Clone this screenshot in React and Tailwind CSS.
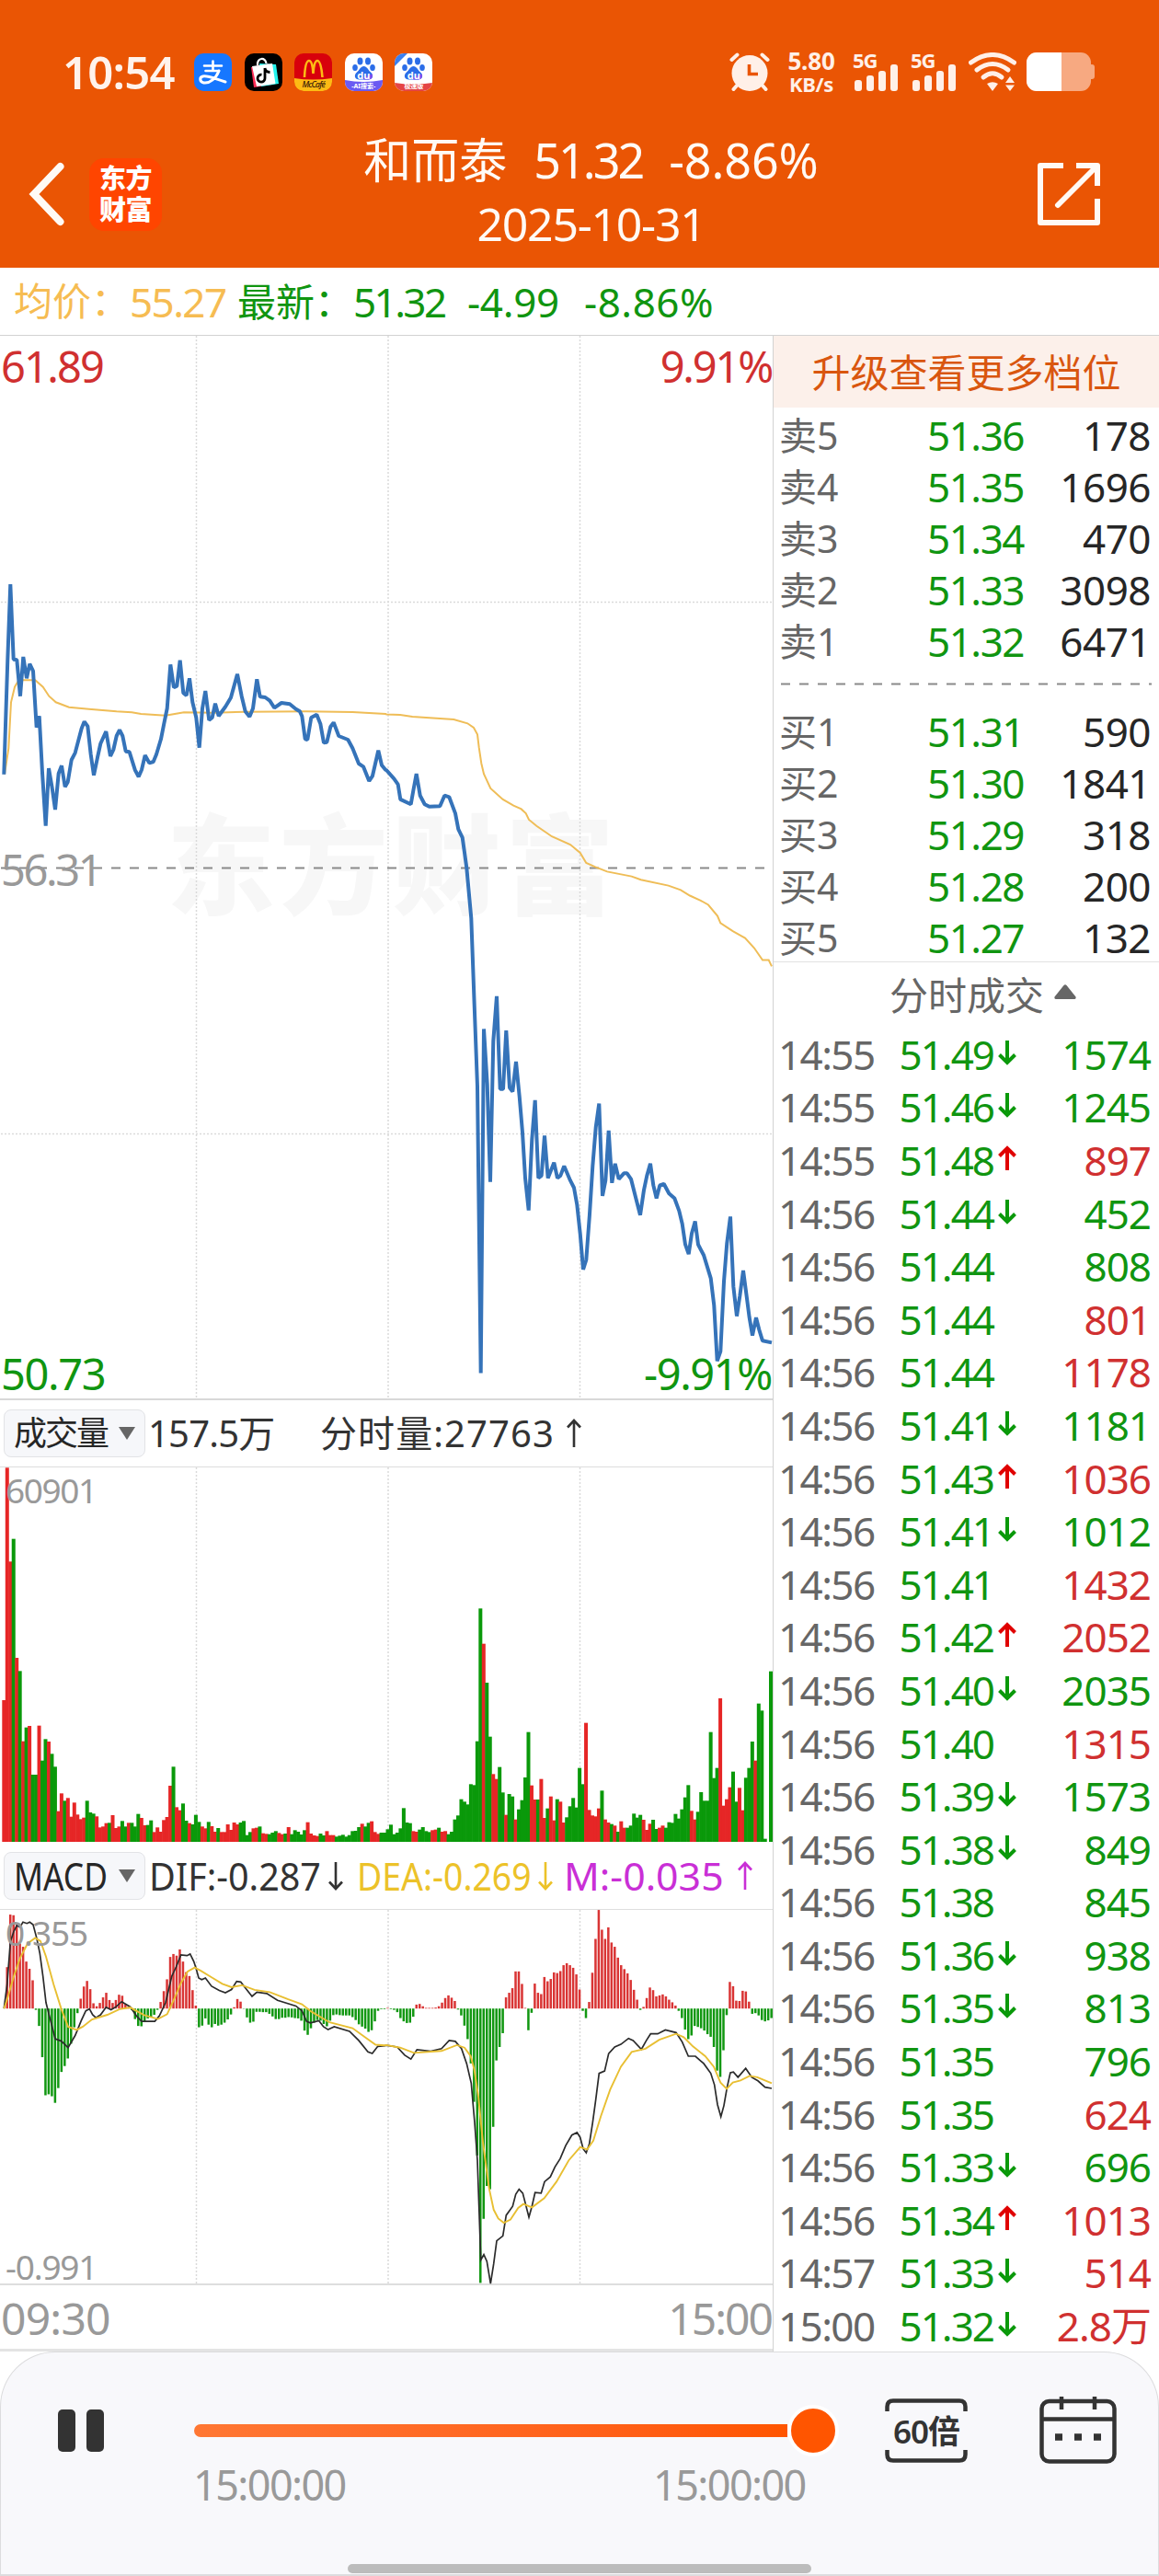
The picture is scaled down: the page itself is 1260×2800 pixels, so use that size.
import React from "react";

const GREEN = "#0a990a";
const RED = "#e62626";

/* ---------- data ---------- */

const asks = [
  ["卖5", "51.36", "178"],
  ["卖4", "51.35", "1696"],
  ["卖3", "51.34", "470"],
  ["卖2", "51.33", "3098"],
  ["卖1", "51.32", "6471"],
];
const bids = [
  ["买1", "51.31", "590"],
  ["买2", "51.30", "1841"],
  ["买3", "51.29", "318"],
  ["买4", "51.28", "200"],
  ["买5", "51.27", "132"],
];
const ticks = [
  ["14:55", "51.49", "d", "1574", "g"],
  ["14:55", "51.46", "d", "1245", "g"],
  ["14:55", "51.48", "u", "897", "r"],
  ["14:56", "51.44", "d", "452", "g"],
  ["14:56", "51.44", "", "808", "g"],
  ["14:56", "51.44", "", "801", "r"],
  ["14:56", "51.44", "", "1178", "r"],
  ["14:56", "51.41", "d", "1181", "g"],
  ["14:56", "51.43", "u", "1036", "r"],
  ["14:56", "51.41", "d", "1012", "g"],
  ["14:56", "51.41", "", "1432", "r"],
  ["14:56", "51.42", "u", "2052", "r"],
  ["14:56", "51.40", "d", "2035", "g"],
  ["14:56", "51.40", "", "1315", "r"],
  ["14:56", "51.39", "d", "1573", "g"],
  ["14:56", "51.38", "d", "849", "g"],
  ["14:56", "51.38", "", "845", "g"],
  ["14:56", "51.36", "d", "938", "g"],
  ["14:56", "51.35", "d", "813", "g"],
  ["14:56", "51.35", "", "796", "g"],
  ["14:56", "51.35", "", "624", "r"],
  ["14:56", "51.33", "d", "696", "g"],
  ["14:56", "51.34", "u", "1013", "r"],
  ["14:57", "51.33", "d", "514", "r"],
  ["15:00", "51.32", "d", "2.8万", "r"],
];

const priceMorning =
  "13,725 25,350 34,105 44,350 55,352 66,470 76,342 87,412 97,365 108,388 119,572 128,535 138,720 149,893 159,705 170,770 180,840 191,722 201,697 212,766 221,750 233,678 245,655 266,575 275,553 286,568 296,660 306,728 318,670 328,625 346,585 360,666 370,645 380,600 390,580 400,600 410,650 422,652 440,710 452,733 462,710 473,663 487,688 500,684 510,660 525,610 535,560 545,510 556,367 567,442 577,437 587,353 598,460 608,468 618,412 628,490 640,540 650,638 660,510 670,453 682,548 692,540 702,494 713,535 735,505 753,475 774,398 788,470 800,520 814,537 825,510 838,415 848,472 865,474 880,485 895,508 918,492 945,496 965,512 978,520 985,535 995,610 1003,612 1015,540 1033,530 1045,560 1056,622 1066,620 1078,570 1088,556 1105,600 1135,612 1150,640 1170,690 1185,700 1204,747 1215,730 1234,647 1245,695 1258,711";
const priceAfternoon =
  "0,262 25,280 38,292 46,323 80,333 88,305 98,270 110,315 125,333 140,338 175,337 190,315 205,318 225,352 235,385 248,402 262,465 277,570 287,750 297,920 308,1515 318,800 329,915 339,1118 349,825 360,732 371,925 381,925 391,803 402,922 412,930 423,868 434,940 444,1015 453,1110 464,1177 475,1030 485,948 496,1110 506,1105 516,1022 527,1110 547,1078 558,1110 568,1105 580,1085 600,1115 612,1130 622,1165 632,1225 642,1300 652,1280 663,1185 673,1085 683,1005 694,955 705,1147 715,1115 725,1011 736,1120 746,1080 758,1112 775,1100 785,1100 798,1112 815,1155 828,1187 840,1135 850,1105 861,1080 871,1125 881,1152 892,1125 905,1122 922,1142 940,1152 955,1178 965,1205 975,1248 986,1268 996,1225 1007,1200 1017,1248 1035,1270 1058,1318 1069,1375 1079,1490 1090,1470 1101,1325 1111,1245 1122,1190 1132,1335 1143,1397 1153,1355 1164,1302 1174,1350 1184,1400 1194,1437 1206,1400 1216,1425 1227,1448 1257,1452";
const avgMorning =
  "15,725 28,640 36,490 48,440 60,420 75,418 115,418 140,440 160,470 182,490 225,506 290,512 380,520 430,523 460,528 540,533 570,528 600,523 700,524 800,521 1000,520 1150,522 1258,528";
const avgAfternoon =
  "0,146 45,147 85,151 220,157 265,165 285,174 297,188 302,215 310,248 318,270 340,300 380,323 415,336 440,343 455,352 465,365 490,378 540,400 600,417 632,434 652,455 680,463 720,473 800,483 830,490 920,502 960,511 990,523 1025,533 1050,542 1080,565 1090,580 1130,597 1170,611 1200,632 1227,657 1247,657 1257,670";

const volumes =
  "1043r 285r 591r 517g 905r 948g 1177r 1132g 1127r 1286g 1286g 1126r 1240g 1170g 1178r 1218g 1260g 1405r 1347r 1371g 1362r 1423r 1377r 1416r 1431r 1426r 1371g 1409g 1413g 1422r 1458r 1455r 1444r 1443g 1418r 1460r 1455r 1437g 1455g 1443r 1443g 1455g 1414g 1427r 1451r 1450g 1435g 1473r 1458r 1472r 1434r 1424r 1322r 1260g 1392r 1402r 1380g 1436g 1444r 1448g 1417g 1440g 1455r 1461r 1440g 1454r 1472r 1460g 1473r 1473r 1448r 1466r 1442r 1448r 1442g 1437g 1483g 1473g 1461r 1459r 1455g 1477r 1479r 1480g 1475g 1470g 1476r 1480r 1478g 1457r 1480g 1467g 1472g 1481g 1467g 1441r 1478r 1484r 1486r 1478g 1484g 1470r 1483r 1483r 1488g 1485g 1482g 1488g 1483g 1470g 1469g 1457g 1446r 1455g 1443g 1438r 1473r 1479r 1475g 1475g 1464g 1449g 1480g 1475g 1461g 1395g 1442g 1444g 1470r 1472r 1465g 1457g 1470g 1473g 1467r 1465r 1459g 1472r 1470r 1480g 1472g 1432g 1419g 1366g 1374g 1383g 1317g 1320g 1177g 744g 859r 986g 1162g 1284r 1300r 1261g 1344g 1417r 1349g 1357g 1432r 1399g 1369g 1295g 1147g 1321r 1367r 1367g 1300r 1427r 1396g 1357r 1435r 1366g 1374r 1442r 1425g 1389g 1362g 1393g 1264g 1317g 1117r 1401r 1419r 1422r 1396r 1338g 1432r 1442r 1447g 1452r 1472g 1438r 1459r 1459g 1452g 1413g 1426g 1417g 1433r 1466r 1446r 1433g 1463g 1459r 1452r 1459g 1441g 1443g 1414g 1429g 1399g 1360g 1320g 1404r 1432r 1407g 1343g 1371g 1371g 1147g 1297g 1264g 1037r 1387r 1366r 1327r 1276g 1374g 1329r 1402r 1296g 1264g 1178g 1240r 1054g 1077g 1495g 1505g 949g"
    .split(" ")
    .map((v) => ({ h: (1505 - parseInt(v, 10)) / 3, up: v.endsWith("r") }));

const histogram =
  "513 387 227 229 258 315 325 370 392 427 517 566 661 777 774 780 800 755 706 688 665 620 570 527 483 446 429 454 497 506 496 479 465 487 496 487 471 474 500 508 518 545 566 567 553 543 538 532 517 493 460 424 356 347 352 333 370 402 414 457 504 570 565 543 562 570 560 565 562 556 546 531 509 484 492 514 540 556 553 523 523 524 524 529 537 545 545 541 541 539 540 542 543 550 580 593 573 556 548 550 560 567 550 533 531 533 534 534 534 539 548 561 568 574 584 579 552 520 515 515 511 515 517 524 542 552 557 556 538 501 499 506 511 511 511 510 506 495 481 473 480 490 516 534 565 606 680 797 960 1348 1153 1053 1063 873 671 630 588 479 465 451 400 400 438 511 579 526 437 465 469 417 430 423 403 405 399 381 375 381 389 409 455 520 542 493 404 301 213 273 301 266 312 325 358 381 393 406 426 456 486 517 508 481 449 457 476 473 470 476 486 494 504 520 542 577 606 595 566 569 573 580 591 599 630 702 721 640 533 432 445 489 490 459 461 492 529 527 534 548 552 549 542"
    .split(" ")
    .map((v) => (513 - Number(v)) / 2.8);

const difMorning =
  "13,513 23,440 34,310 45,278 55,260 65,265 75,250 88,254 97,250 108,258 120,300 130,345 140,415 150,495 165,550 180,605 200,612 222,632 245,595 265,550 280,520 292,514 302,532 313,541 328,532 346,509 362,517 378,508 397,492 425,508 445,535 462,552 505,552 520,535 540,495 560,415 575,385 590,350 610,352 620,347 632,370 640,392 648,420 658,425 670,420 690,445 715,458 735,465 755,455 772,430 785,432 800,450 822,476 838,463 870,467 905,488 965,505 985,520 1000,552 1012,557 1040,550 1055,568 1070,577 1090,568 1140,582 1170,610 1200,645 1214,650 1232,628 1255,626";
const difAfternoon =
  "0,625 35,630 60,655 80,667 100,638 145,643 180,635 205,610 225,613 245,635 262,680 277,740 288,860 297,975 308,1278 318,1262 328,1282 340,1350 350,1290 360,1220 380,1205 391,1142 412,1115 422,1078 433,1063 445,1075 465,1148 475,1115 485,1073 505,1075 516,1040 535,1025 550,995 567,970 585,930 605,898 622,890 632,905 642,940 652,952 662,925 673,860 683,790 694,710 712,703 725,650 745,630 765,622 790,604 805,610 832,637 848,610 862,590 885,590 910,578 945,586 965,615 985,658 1008,658 1035,680 1058,710 1070,745 1080,805 1091,842 1101,808 1111,755 1122,708 1132,706 1147,722 1158,710 1172,695 1192,722 1212,733 1235,752 1257,756";
const deaMorning =
  "13,513 25,480 45,415 65,360 90,315 115,298 132,308 150,355 175,440 200,515 222,568 250,578 270,568 300,546 350,532 390,515 425,510 470,533 515,545 545,530 570,480 590,435 612,400 635,388 655,398 690,418 725,438 755,448 790,442 830,456 880,463 940,485 985,500 1015,522 1075,555 1150,573 1190,600 1225,623 1255,625";
const deaAfternoon =
  "0,624 45,632 90,648 180,642 230,624 255,632 275,658 287,700 300,780 315,920 335,1060 350,1125 365,1152 383,1165 405,1155 430,1120 447,1108 475,1118 515,1090 555,1040 595,975 632,935 655,942 675,915 700,840 730,760 765,690 800,645 845,635 890,608 945,590 970,600 1000,628 1040,658 1068,690 1090,738 1110,757 1130,738 1155,732 1185,718 1210,722 1257,740";

const project = (list, dx, dy, sy) =>
  list
    .split(" ")
    .map((p) => {
      const [x, y] = p.split(",").map(Number);
      return `${(x / 3 + dx).toFixed(1)},${(y / sy + dy).toFixed(1)}`;
    })
    .join(" ");

/* ---------- icons ---------- */

function Alipay() {
  return (
    <div className="flex size-[41px] items-center justify-center rounded-[10px] bg-[#1677ff]">
      <svg viewBox="0 0 41 41" className="size-full" fill="none" stroke="#fff" strokeLinecap="round">
        <path d="M11 13.5H30M20.5 8.5V18M12.5 19H27" strokeWidth="2.6" />
        <path d="M27 19C24 27 17 33 10.500 32C6 31 5.500 26 9.500 25C15 23.800 22 27.500 34 31" strokeWidth="3" />
      </svg>
    </div>
  );
}

function DouyinShop() {
  return (
    <svg viewBox="0 0 41 41" className="size-[41px]">
      <rect width="41" height="41" rx="10" fill="#000" />
      <path d="M7 15 26 11 30 34 10 37Z" fill="#ff2c55" />
      <path d="M16 11 34 12 37 33 18 36Z" fill="#25f4ee" />
      <path d="M8 14 30 11 33.500 33 13 36Z" fill="#fff" />
      <path d="M14 13C13 4 23 4 23.500 11" fill="none" stroke="#fff" strokeWidth="2.200" />
      <path d="M22 16V27A4 4 0 1 1 18.500 23.200M22 16C22.500 19.500 24.500 20.500 27.500 20.500" fill="none" stroke="#000" strokeWidth="2.800" />
    </svg>
  );
}

function McCafe() {
  return (
    <div className="relative size-[41px] overflow-hidden rounded-[10px] bg-[#d8000c]">
      <svg viewBox="0 0 41 41" className="size-full">
        <path d="M0 27Q20 30 41 27V41H0Z" fill="#fdbb14" />
        <path d="M11 26C11.500 15 13 8 16 8C18.500 8 20 14 20.500 22C21 14 22.500 8 25 8C28 8 29.500 15 30.500 26" fill="none" stroke="#fdbb14" strokeWidth="2.600" />
      </svg>
      <span className="absolute inset-x-0 top-[29px] text-center text-[9px] leading-none font-medium tracking-[-0.9px] text-[#3a1a08] italic">
        McCafé
      </span>
    </div>
  );
}

function Baidu({ label, lite }) {
  return (
    <div className="relative size-[41px] overflow-hidden rounded-[10px] bg-white">
      <svg viewBox="0 0 41 41" className="size-full">
        <g fill="#2b6de8">
          <ellipse cx="16.500" cy="8.500" rx="3" ry="4" />
          <ellipse cx="25" cy="8.500" rx="3" ry="4" />
          <ellipse cx="11" cy="15.500" rx="2.800" ry="3.600" />
          <ellipse cx="30" cy="15.500" rx="2.800" ry="3.600" />
          <path d="M20.500 14C24 14 25 18 28 20.500C32 24 30 28.500 25.500 28.500H15.500C11 28.500 9 24 13 20.500C16 18 17 14 20.500 14Z" />
        </g>
        <path d="M20.500 28.500H25.500C29 28.500 31 25 29.500 22.500L20 26Z" fill="#7b4df0" />
        {lite && <path d="M0 0H14L0 14Z" fill="#3a7ff0" />}
        {lite ? <path d="M0 32Q20 35 41 32V41H0Z" fill="#e54545" /> : <path d="M0 29Q20 33 41 29V41H0Z" fill="#6a5af2" />}
      </svg>
      <span className="absolute inset-x-0 top-[18px] text-center text-[11px] leading-none font-bold text-white">du</span>
      <span className="absolute inset-x-0 top-[32px] text-center text-[7px] leading-none font-bold whitespace-nowrap text-white">
        {label}
      </span>
    </div>
  );
}

function Signal() {
  return (
    <div className="relative h-[42px] w-[50px] text-[#fff0e8]">
      <span className="absolute top-[-3px] left-0 text-[22px] leading-none font-bold tracking-[-1px]">5G</span>
      <svg viewBox="0 0 50 42" className="size-full" fill="#fff0e8">
        <rect x="2" y="30" width="8" height="12" rx="3" />
        <rect x="15" y="25" width="8" height="17" rx="3" />
        <rect x="28" y="20" width="8" height="22" rx="3" />
        <rect x="41" y="13" width="8" height="29" rx="3" />
      </svg>
    </div>
  );
}

function StatusBar() {
  return (
    <div className="flex h-[42px] items-center pr-[70px] pl-[68px]">
      <span className="w-[143px] text-[49px] leading-none font-semibold tracking-[-0.8px] text-[#fff3ec]">10:54</span>
      <div className="flex gap-[13.6px]">
        <Alipay />
        <DouyinShop />
        <McCafe />
        <Baidu label="-AI搜索-" />
        <Baidu label="极速版" lite />
      </div>
      <div className="ml-auto flex h-[42px] items-center">
        <svg viewBox="0 0 44 42" className="h-[42px] w-[44px]">
          <g stroke="#fff0e8" strokeWidth="4" strokeLinecap="round">
            <path d="M2.500 8 8.500 2.500M41.500 8 35.500 2.500M8 36 4.500 40M36 36 39.500 40" />
          </g>
          <circle cx="22" cy="22.500" r="19.500" fill="#fff0e8" />
          <path d="M21.500 13V23.500H31" fill="none" stroke="#ea5504" strokeWidth="3.600" />
        </svg>
        <div className="ml-[17px] flex w-[56px] flex-col items-center text-[#fff0e8]">
          <span className="text-[26px] leading-[26px] font-bold tracking-[-0.2px]">5.80</span>
          <span className="text-[22px] leading-[24px] font-bold tracking-[-0.3px]">KB/s</span>
        </div>
        <div className="ml-[17px] flex gap-[13px]">
          <Signal />
          <Signal />
        </div>
        <svg viewBox="0 0 52 42" className="ml-[13px] h-[42px] w-[52px]" fill="none" stroke="#fff0e8" strokeLinecap="round">
          <path d="M2.500 11Q26-6 49.500 11" strokeWidth="5" />
          <path d="M9 19Q26 6 43 19" strokeWidth="5" />
          <path d="M16 27Q26 18.500 36 27" strokeWidth="5" />
          <path d="M20 34Q26 30.500 32 34L26 42Z M45 26 50 33H40Z M40 35.500H50L45 42Z" fill="#fff0e8" stroke="none" />
        </svg>
        <div className="ml-[11px] flex items-center">
          <div className="flex h-[42px] w-[70px] overflow-hidden rounded-[11px] bg-[#f7a981]">
            <div className="w-[38px] bg-white" />
          </div>
          <div className="h-[16px] w-[4px] rounded-r-[3px] bg-[#f7a981]" />
        </div>
      </div>
    </div>
  );
}

/* ---------- header ---------- */

function TitleBar() {
  return (
    <div className="flex h-[192px] items-center pt-[32px]">
      <div className="flex w-[280px] items-center pl-[28px]">
        <svg viewBox="0 0 44 70" className="h-[70px] w-[44px]" fill="none" stroke="#fffaf5" strokeWidth="8">
          <path d="M37.500 5 9 35 37.500 65" strokeLinejoin="miter" strokeLinecap="round" />
        </svg>
        <div className="ml-[25px] flex size-[79px] flex-col items-center justify-center rounded-[16px] bg-[#ff4500] pb-[1px] text-[29px] leading-[34px] font-black tracking-[-0.5px] text-white">
          <span>东方</span>
          <span>财富</span>
        </div>
      </div>
      <div className="flex w-[725px] flex-col items-center pb-[4px] text-[#fffaf5]">
        <div className="flex h-[68px] items-center gap-[29px] text-[52px] leading-none">
          <span>和而泰</span>
          <span className="tracking-[-3px]">51.32</span>
          <span className="tracking-[-0.1px]">-8.86%</span>
        </div>
        <div className="flex h-[70px] items-center text-[50px] leading-none tracking-[-1.3px]">2025-10-31</div>
      </div>
      <svg viewBox="0 0 68 68" className="ml-[123px] size-[68px]" fill="none" stroke="#fffaf5" strokeWidth="6" strokeLinejoin="round">
        <path d="M28 3H3V65H65V39M42 3H65V25" />
        <path d="M22 46 64 4" strokeLinecap="round" />
      </svg>
    </div>
  );
}

function SummaryBar() {
  return (
    <div className="flex h-[73px] items-center pl-[15px] text-[42px] leading-none text-[#109510]">
      <div className="flex w-[243px] text-[#f6bc52]">
        <span className="w-[126px]">均价：</span>
        <span className="text-[44px] tracking-[-1.6px]">55.27</span>
      </div>
      <span className="w-[126px]">最新：</span>
      <span className="w-[124px] text-[44px] tracking-[-2.6px]">51.32</span>
      <span className="w-[127px] text-[44px] tracking-[-0.3px]">-4.99</span>
      <span className="text-[44px] tracking-[0.5px]">-8.86%</span>
    </div>
  );
}

/* ---------- charts ---------- */

function GridColumns({ height }) {
  return (
    <g stroke="#dadada" strokeWidth="1.500" strokeDasharray="2 2">
      <path d={`M213.500 0V${height}M422 0V${height}M630.500 0V${height}`} />
    </g>
  );
}

function PriceChart() {
  return (
    <div className="relative h-[1156px] border-t border-[#d2d2d2]">
      <div className="absolute top-[515px] left-[181px] text-[118px] leading-[120px] font-black tracking-[4.8px] text-[#f7f7f7]">
        东方财富
      </div>
      <svg viewBox="0 365 840 1155" className="absolute inset-0 h-[1155px] w-[840px]" fill="none">
        <g transform="translate(0 365)">
          <GridColumns height={1155} />
        </g>
        <path d="M1 654.500H839M1 1232.500H839" stroke="#dadada" strokeWidth="1.500" strokeDasharray="2 2" />
        <path d="M1 943.500H832" stroke="#8a8a8a" strokeWidth="2" strokeDasharray="10 10" />
        <polyline
          points={`${project(avgMorning, 0, 600, 3)} ${project(avgAfternoon, 420, 700, 1.912)}`}
          stroke="#efbd57"
          strokeWidth="2"
        />
        <polyline
          points={`${project(priceMorning, 0, 600, 3)} ${project(priceAfternoon, 420, 700, 1.912)}`}
          stroke="#3573b9"
          strokeWidth="4"
          strokeLinejoin="bevel"
        />
      </svg>
      <div className="absolute inset-x-[1px] top-[10px] flex justify-between text-[47px] leading-none tracking-[-1.8px] text-[#d03030]">
        <span>61.89</span>
        <span className="tracking-[-2.2px]">9.91%</span>
      </div>
      <span className="absolute top-[557px] left-[1px] text-[47px] leading-none tracking-[-2.4px] text-[#999]">56.31</span>
      <div className="absolute inset-x-[1px] bottom-[3px] flex justify-between text-[47px] leading-none tracking-[-1.4px] text-[#109510]">
        <span>50.73</span>
        <span>-9.91%</span>
      </div>
    </div>
  );
}

function IndicatorBadge({ children }) {
  return (
    <div className="relative ml-[4px] flex h-[52px] w-[154px] items-center justify-between rounded-[8px] border border-[#e2e3e6] bg-[#f6f7fa] pr-[10px] pl-[10px] text-[#262626]">
      {children}
      <svg viewBox="0 0 18 14" className="absolute right-[10px] h-[14px] w-[18px]" fill="#666">
        <path d="M0 0H18L9 14Z" />
      </svg>
    </div>
  );
}

function ThinArrow({ up }) {
  return (
    <svg viewBox="0 0 16 32" className="h-[32px] w-[16px]" fill="none" stroke="currentColor" strokeWidth="2.600">
      {up ? <path d="M8 31V2M1 9.500 8 2 15 9.500" /> : <path d="M8 1V30M1 22.500 8 30 15 22.500" />}
    </svg>
  );
}

function VolumeChart() {
  return (
    <>
      <div className="flex h-[74px] items-center border-t-2 border-[#d8d8d8] text-[#333]">
        <IndicatorBadge>
          <span className="text-[36px] leading-none tracking-[-2px]">成交量</span>
        </IndicatorBadge>
        <span className="ml-[3px] w-[187px] text-[40px] leading-none tracking-[-0.8px]">157.5万</span>
        <span className="w-[268px] text-[40px] leading-none tracking-[1.1px]">分时量:27763</span>
        <ThinArrow up />
      </div>
      <div className="relative h-[409px] border-t border-[#dedede]">
        <svg viewBox="0 0 840 409" className="absolute inset-0 h-[409px] w-[840px]">
          <GridColumns height={407} />
          {volumes.map((v, i) => (
            <rect
              key={i}
              x={i === 240 ? 836 : 2.3 + i * 3.4767}
              y={407 - v.h}
              width="4"
              height={v.h}
              fill={v.up ? RED : GREEN}
            />
          ))}
        </svg>
        <span className="absolute top-[6px] left-[6px] text-[37px] leading-none tracking-[-1.4px] text-[#999]">60901</span>
      </div>
    </>
  );
}

function MacdChart() {
  return (
    <>
      <div className="flex h-[72px] items-center text-[42px] leading-none text-[#333]">
        <IndicatorBadge>
          <span className="origin-left scale-x-[0.84]">MACD</span>
        </IndicatorBadge>
        <div className="ml-[4px] flex w-[226px] items-center">
          <span className="w-[195px] origin-left scale-x-[0.94]">DIF:-0.287</span>
          <ThinArrow />
        </div>
        <div className="flex w-[225px] items-center text-[#ecc229]">
          <span className="w-[197px] origin-left scale-x-[0.89] whitespace-nowrap">DEA:-0.269</span>
          <ThinArrow />
        </div>
        <div className="flex items-center text-[#c92fd6]">
          <span className="w-[189px] origin-left scale-x-[1.02]">M:-0.035</span>
          <ThinArrow up />
        </div>
      </div>
      <div className="relative h-[409px] border-y border-b-2 border-[#dedede]">
        <svg viewBox="0 2076 840 407" className="absolute inset-0 h-[407px] w-[840px]" fill="none">
          <g transform="translate(0 2076)">
            <GridColumns height={407} />
          </g>
          {histogram.map((h, i) => (
            <rect
              key={i}
              x={3 + i * 3.4767}
              y={h > 0 ? 2183.2 - h : 2183.2}
              width="2.5"
              height={Math.abs(h)}
              fill={h > 0 ? "#d93434" : "#119711"}
            />
          ))}
          <polyline
            points={`${project(difMorning, 0, 2000, 2.8)} ${project(difAfternoon, 420, 2000, 2.8)}`}
            stroke="#2b2b2b"
            strokeWidth="1.700"
          />
          <polyline
            points={`${project(deaMorning, 0, 2000, 2.8)} ${project(deaAfternoon, 420, 2000, 2.8)}`}
            stroke="#e8bf32"
            strokeWidth="1.900"
          />
        </svg>
        <span className="absolute top-[6px] left-[6px] text-[37px] leading-none tracking-[-1.1px] text-[#999]">0.355</span>
        <span className="absolute bottom-[0px] left-[6px] text-[37px] leading-none tracking-[-1.2px] text-[#999]">-0.991</span>
      </div>
    </>
  );
}

/* ---------- quotes ---------- */

function TickArrow({ dir }) {
  if (!dir) return <span className="w-[20px]" />;
  return (
    <svg
      viewBox="0 0 20 28"
      className={dir === "u" ? "h-[28px] w-[20px] text-[#e00000]" : "h-[28px] w-[20px] text-[#0a990a]"}
      fill="none"
      stroke="currentColor"
      strokeWidth="4"
    >
      {dir === "u" ? <path d="M10 27V3M1.500 11.500 10 3 18.500 11.500" /> : <path d="M10 1V25M1.500 16.500 10 25 18.500 16.500" />}
    </svg>
  );
}

function LevelRows({ rows }) {
  return rows.map(([name, price, qty]) => (
    <div key={name} className="flex h-[56px] shrink-0 items-center text-[44px] leading-none">
      <span className="w-[103px] text-[41px] text-[#666]">{name}</span>
      <span className="w-[163px] text-right tracking-[-1.5px] text-[#109510]">{price}</span>
      <span className="w-[138px] text-right tracking-[-0.5px] text-[#262626]">{qty}</span>
    </div>
  ));
}

function QuotePanel() {
  return (
    <div className="flex w-[420px] flex-col border-t border-l border-[#d2d2d2]">
      <div className="flex h-[78px] shrink-0 items-center justify-center bg-[#fcf0ea] pt-[2px] text-[42px] leading-none text-[#d9560f]">
        升级查看更多档位
      </div>
      <div className="flex h-[603px] shrink-0 flex-col border-b border-[#e2e2e2] pt-[2px] pl-[6px]">
        <LevelRows rows={asks} />
        <svg viewBox="0 0 403 42" className="ml-[2px] h-[42px] w-[403px] shrink-0">
          <path d="M0 18.500H403" stroke="#8a8a8a" strokeWidth="2" strokeDasharray="10 10" />
        </svg>
        <LevelRows rows={bids} />
      </div>
      <div className="flex h-[71px] shrink-0 items-center justify-center gap-[11px] pl-[36px] text-[42px] leading-none text-[#666]">
        <span>分时成交</span>
        <svg viewBox="0 0 24 16" className="mb-[8px] h-[16px] w-[24px]" fill="#666">
          <path d="M10.500 1Q12-.5 13.500 1L23.500 13.500Q24 16 22 16H2Q0 16 .5 13.500Z" />
        </svg>
      </div>
      <div className="pl-[5px]">
        {ticks.map(([time, price, dir, qty, tone], i) => (
          <div key={i} className="flex h-[57.6px] items-center text-[44px] leading-none">
            <span className="w-[115px] tracking-[-1.6px] text-[#666]">{time}</span>
            <span className="w-[119px] text-right tracking-[-2px] text-[#109510]">{price}</span>
            <span className="ml-[5px] flex pb-[4px]">
              <TickArrow dir={dir} />
            </span>
            <span
              className={
                tone === "g"
                  ? "w-[146px] text-right tracking-[-1px] text-[#109510]"
                  : "w-[146px] text-right tracking-[-1px] text-[#d03030]"
              }
            >
              {qty}
            </span>
          </div>
        ))}
      </div>
    </div>
  );
}

/* ---------- player ---------- */

function Player() {
  return (
    <div className="relative h-[244px] w-full shrink-0 rounded-t-[60px] border border-b-2 border-[#dcdcde] bg-[#f8f8fb]">
      <div className="flex h-[170px] items-center pl-[62px]">
        <div className="flex w-[148px] gap-[12px]">
          <div className="h-[46px] w-[19px] rounded-[5px] bg-[#333]" />
          <div className="h-[46px] w-[19px] rounded-[5px] bg-[#333]" />
        </div>
        <div className="flex w-[751px] items-center">
          <div className="h-[14px] w-[645px] rounded-l-[7px] bg-gradient-to-r from-[#ff7733] to-[#ff5500]" />
          <div className="size-[56px] rounded-full border-4 border-white bg-[#ff5500]" />
        </div>
        <div className="relative flex h-[70px] w-[90px] items-center justify-center text-[35px] leading-none font-semibold text-[#333]">
          <svg viewBox="0 0 90 70" className="absolute inset-0" fill="none" stroke="#333" strokeWidth="4.500">
            <path d="M2.500 14V9Q2.500 2.500 9 2.500H81Q87.500 2.500 87.500 9V14M2.500 56V61Q2.500 67.500 9 67.500H81Q87.500 67.500 87.500 61V56" />
          </svg>
          <span className="flex items-center tracking-[-1px]">60倍</span>
        </div>
        <svg viewBox="0 0 84 74" className="mb-[2px] ml-[78px] h-[74px] w-[84px]" fill="none" stroke="#333" strokeWidth="4.500">
          <rect x="2.500" y="6" width="79" height="65.500" rx="8" />
          <path d="M2.500 25.500H81.500M24 1V15M60 1V15" />
          <path d="M17 45H25M38 45H46M59 45H67" strokeWidth="7.500" />
        </svg>
      </div>
      <div className="-mt-[49px] flex pl-[209px] text-[45px] leading-[46px] tracking-[-1.6px] text-[#999]">
        <span className="w-[500px]">15:00:00</span>
        <span>15:00:00</span>
      </div>
      <div className="absolute bottom-[1px] left-[377px] h-[10px] w-[504px] rounded-full bg-[#bcbcbc]" />
    </div>
  );
}

export default function App() {
  return (
    <div className="flex h-[2800px] w-[1260px] flex-col overflow-hidden bg-white font-['Noto_Sans','Noto_Sans_CJK_SC',sans-serif]">
      <div className="h-[291px] shrink-0 bg-[#ea5504] pt-[57px]">
        <StatusBar />
        <TitleBar />
      </div>
      <SummaryBar />
      <div className="flex h-[2192px] shrink-0">
        <div className="flex w-[840px] flex-col">
          <PriceChart />
          <VolumeChart />
          <MacdChart />
          <div className="flex h-[72px] items-center justify-between border-b-[3px] border-[#e4e4e4] px-[1px] pt-[2px] text-[48px] leading-none tracking-[-2px] text-[#999]">
            <span className="tracking-[-0.8px]">09:30</span>
            <span>15:00</span>
          </div>
        </div>
        <QuotePanel />
      </div>
      <Player />
    </div>
  );
}
